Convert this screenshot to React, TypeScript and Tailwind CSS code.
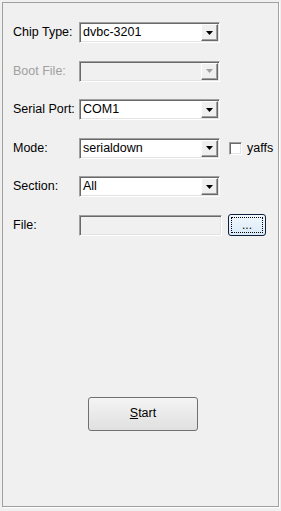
import React from "react";

const font = { fontFamily: '"Liberation Sans", Arial, sans-serif' };

// sunken 3d border like classic windows edit controls
const sunken =
  "border border-t-[#a0a0a0] border-l-[#a0a0a0] border-b-white border-r-white shadow-[inset_1px_1px_0_#696969,inset_-1px_-1px_0_#e3e3e3]";

const Arrow = ({ disabled }: { disabled?: boolean }) => (
  <svg width="7" height="4" viewBox="0 0 7 4">
    <polygon points="0,0 7,0 3.5,4" fill={disabled ? "#a0a0a0" : "#000"} />
  </svg>
);

const Combo = ({ value, disabled }: { value?: string; disabled?: boolean }) => (
  <div
    className={`relative flex h-[21px] w-[141px] items-center ${sunken} ${
      disabled ? "bg-[#f0f0f0]" : "bg-white"
    }`}
  >
    <span className="flex-1 pl-[3px] text-[12.5px] leading-none text-black">{value}</span>
    <div className="mr-[1px] flex h-[17px] w-[17px] items-center justify-center border border-t-white border-l-white border-b-[#696969] border-r-[#696969] bg-[#f0f0f0] shadow-[inset_-1px_-1px_0_#a0a0a0]">
      <Arrow disabled={disabled} />
    </div>
  </div>
);

const Row = ({
  label,
  disabled,
  children,
}: {
  label: string;
  disabled?: boolean;
  children: React.ReactNode;
}) => (
  <div className="flex h-[21px] items-center">
    <span
      className={`w-[66px] text-[12.5px] leading-none ${
        disabled ? "text-[#a0a0a0]" : "text-black"
      }`}
    >
      {label}
    </span>
    {children}
  </div>
);

export default function App() {
  return (
    <div className="h-[511px] w-[281px] overflow-hidden bg-[#f0f0f0] p-[2px]" style={font}>
      <div className="flex h-[505px] w-[277px] flex-col border border-[#a0a0a0] shadow-[1px_1px_0_#ffffff] pl-[10px] pt-[19px]">
        <div className="flex flex-col gap-[17.5px]">
          <Row label="Chip Type:">
            <Combo value="dvbc-3201" />
          </Row>
          <Row label="Boot File:" disabled>
            <Combo disabled />
          </Row>
          <Row label="Serial Port:">
            <Combo value="COM1" />
          </Row>
          <Row label="Mode:">
            <Combo value="serialdown" />
            <div className={`ml-[9px] h-[13px] w-[13px] bg-white ${sunken}`} />
            <span className="ml-[5px] text-[12.5px] leading-none text-black">yaffs</span>
          </Row>
          <Row label="Section:">
            <Combo value="All" />
          </Row>
          <Row label="File:">
            <div className={`h-[21px] w-[143px] bg-[#f0f0f0] ${sunken}`} />
            <button className="ml-[6px] flex h-[22px] w-[38px] items-center justify-center rounded-[3px] border border-[#0f1f3d] bg-gradient-to-b from-[#f1f7fd] to-[#d9eaf7] p-[2px]">
              <span className="flex h-full w-full items-center justify-center border border-dotted border-black text-[12px] leading-none text-black">
                ...
              </span>
            </button>
          </Row>
        </div>
        <div className="mt-[161px] pl-[75px]">
          <button className="flex h-[34px] w-[110px] items-center justify-center rounded-[3px] border border-[#707070] bg-gradient-to-b from-[#f4f4f4] to-[#e0e0e0] text-[12.5px] text-black">
            <span>
              <span className="underline">S</span>tart
            </span>
          </button>
        </div>
      </div>
    </div>
  );
}
